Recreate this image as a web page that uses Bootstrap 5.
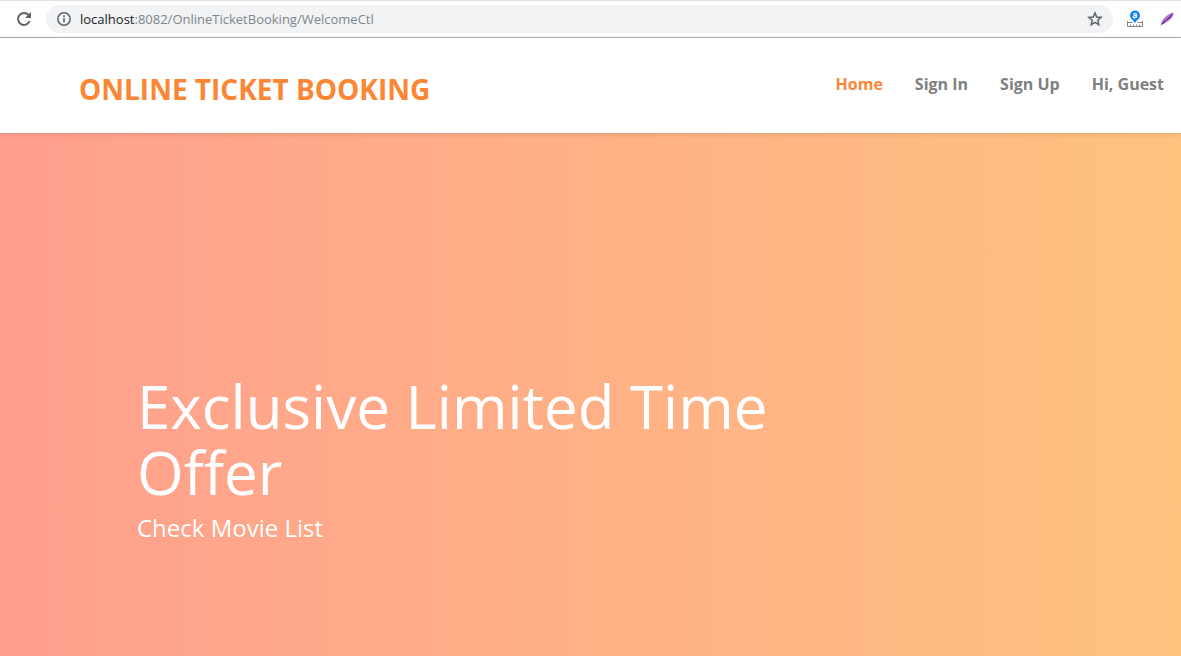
<!DOCTYPE html>
<html lang="en">
<head>
<meta charset="utf-8">
<meta name="viewport" content="width=device-width, initial-scale=1">
<title>Online Ticket Booking</title>
<link href="https://cdn.jsdelivr.net/npm/bootstrap@5.3.0/dist/css/bootstrap.min.css" rel="stylesheet">
<style>
body{font-family:"Open Sans","Noto Sans",sans-serif;color:#808080}
.browser-bar{height:38px;padding:0 6px 0 16px;border-top:1px solid #dee1e6;border-bottom:1px solid #b1b1b3}
.tool-btn{color:#5f6368;line-height:0}
.omnibox{height:28px;margin:0 14px;padding:0 10px 0 11px;background:#f1f3f4;font-size:13px}
.url-text{height:28px;line-height:28px;margin-left:9px;color:#80868b;outline:0}
.url-host{color:#202124}
.site-header{min-height:95px;box-shadow:0 1px 5px rgba(0,0,0,.14);z-index:1}
.site-brand{font-size:28px;line-height:36px;font-weight:700;color:#fb8735;padding:33px 0 0 79px}
.site-links{gap:32px;padding:34px 17px 0 0}
.site-links .nav-link{font-size:16px;line-height:24px;font-weight:700;color:#808080;padding:0}
.site-links .nav-link.active{color:#fb8735}
.hero{background:linear-gradient(90deg,#ff9f8e,#ffad87 40%,#ffc27f);padding:240px 0 0 137px}
.hero-title{font-size:60px;line-height:66px;font-weight:400;max-width:700px}
.hero-sub{font-size:24px;line-height:30px}
</style>
</head>
<body class="d-flex flex-column min-vh-100">
<div class="browser-bar d-flex align-items-center bg-white flex-shrink-0">
  <button class="tool-btn btn p-0 border-0" type="button" aria-label="Reload">
    <svg width="16" height="16" viewBox="0 0 16 16" fill="none" stroke="#5f6368" stroke-width="2"><path d="M13.6 10.2A6 6 0 1 1 12.6 4L14 5.4"/><path d="M15 1v6H9z" fill="#5f6368" stroke="none"/></svg>
  </button>
  <div class="omnibox d-flex align-items-center flex-grow-1 rounded-pill">
    <button class="tool-btn btn p-0 border-0" type="button" aria-label="Site information">
      <svg width="14" height="14" viewBox="0 0 14 14" fill="none" stroke="#5f6368"><circle cx="7" cy="7" r="6.2" stroke-width="1.5"/><path d="M7 6v4.500M7 3.300v1.600" stroke-width="1.600"/></svg>
    </button>
    <div class="url-text flex-grow-1 text-nowrap overflow-hidden" role="textbox" contenteditable="true" spellcheck="false" aria-label="Address"><span class="url-host">localhost</span>:8082/OnlineTicketBooking/WelcomeCtl</div>
    <button class="tool-btn btn p-0 border-0" type="button" aria-label="Bookmark this page">
      <svg width="16" height="16" viewBox="0 0 16 16" fill="none" stroke="#5f6368" stroke-width="1.5"><path d="M8 2l1.700 4 4.400.4-3.300 2.900 1 4.300L8 11.300l-3.800 2.300 1-4.300L1.900 6.400 6.300 6z"/></svg>
    </button>
  </div>
  <button class="tool-btn btn p-0 border-0 me-3" type="button" aria-label="Ruler extension">
    <svg width="16" height="18" viewBox="0 0 16 18"><path d="M8 13L5 9h6z" fill="#0f86f5"/><circle cx="8" cy="5.500" r="5" fill="#0f86f5"/><path d="M6.200 4.100q3.300-1.300 3.300.8v2.900M9.500 5.500C5.500 5.200 5.600 8 7.400 7.800q1.400-.1 2.100-1.300" fill="none" stroke="#fff" stroke-width="1.200"/><path d="M.5 11v5.500h15V11M0 12.500h5.500M10.500 12.500H16M3.500 16v-1.500M6.500 16v-1.500M9.500 16v-1.500M12.500 16v-1.500" fill="none" stroke="#858585"/></svg>
  </button>
  <button class="tool-btn btn p-0 border-0" type="button" aria-label="Feather extension">
    <svg width="16" height="18" viewBox="0 0 17 18"><path d="M2 15C3 9 8 4 15.500 2c0 5-5 10-11.500 12.500z" fill="#a66bc8"/><path d="M1 17L4 12.500 15 2.500C13 7 9 10.500 4.500 13.500z" fill="#6b2c91"/><path d="M5 10.500l6-5M6.500 12.500l5-3.500" stroke="#d3addf" stroke-width=".8"/></svg>
  </button>
</div>
<header class="site-header d-flex justify-content-between align-items-start bg-white position-relative flex-shrink-0">
  <a class="site-brand text-decoration-none text-nowrap" href="#">ONLINE TICKET BOOKING</a>
  <nav aria-label="Main"><ul class="site-links nav flex-nowrap text-nowrap">
    <li><a class="nav-link active" aria-current="page" href="#">Home</a></li>
    <li><a class="nav-link" href="#">Sign In</a></li>
    <li><a class="nav-link" href="#">Sign Up</a></li>
    <li><a class="nav-link" href="#">Hi, Guest</a></li>
  </ul></nav>
</header>
<main class="hero flex-grow-1 text-white">
  <h1 class="hero-title mb-2">Exclusive Limited Time Offer</h1>
  <p class="hero-sub mb-0">Check Movie List</p>
</main>
<script src="https://cdn.jsdelivr.net/npm/bootstrap@5.3.0/dist/js/bootstrap.bundle.min.js"></script>
</body>
</html>
